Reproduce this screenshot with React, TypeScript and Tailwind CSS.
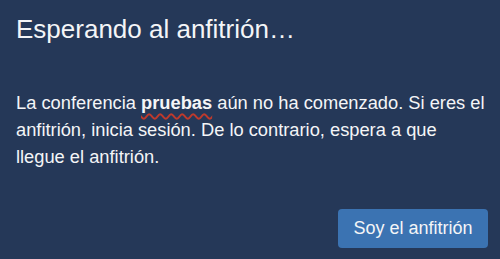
export default function App() {
  return (
    <div className="w-[500px] h-[259px] bg-[#253858] text-white flex flex-col pl-4 pr-[10px] pt-[11px]" style={{ fontFamily: '"Liberation Sans", Arial, sans-serif' }}>
      <h1 className="text-[26px] leading-[36px] text-[#f4f5f7]">Esperando al anfitrión…</h1>
      <p className="mt-[42px] w-[473px] text-[18.3px] leading-[27px] text-[#f4f5f7]">
        La conferencia{' '}
        <span className="font-bold underline decoration-wavy decoration-[#c0392b] decoration-[1.5px] underline-offset-[4px]">pruebas</span>{' '}
        aún no ha comenzado. Si eres el anfitrión, inicia sesión. De lo contrario, espera a que llegue el anfitrión.
      </p>
      <div className="mt-auto mb-[11px] flex justify-end pr-[2px]">
        <button className="bg-[#3b73b2] rounded-[4px] h-[39px] w-[150px] text-[18px] text-[#f4f5f7]">
          Soy el anfitrión
        </button>
      </div>
    </div>
  );
}
